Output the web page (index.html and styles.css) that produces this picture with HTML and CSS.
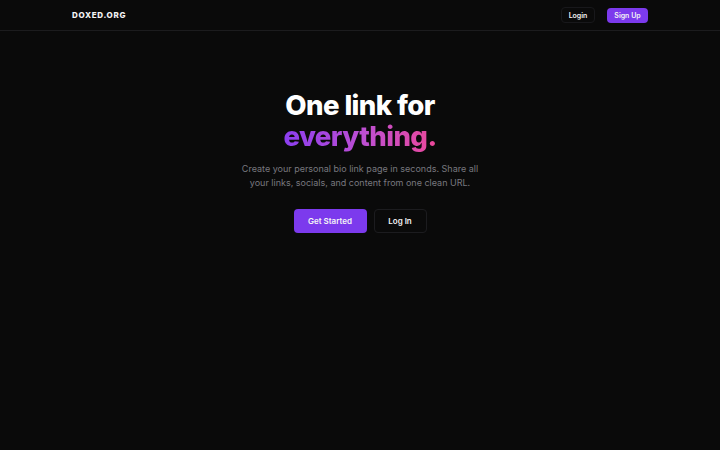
FILE: index.html
```html
<!DOCTYPE html>
<html lang="en">
<head>
<meta charset="utf-8">
<title>DOXED.ORG</title>
<link rel="stylesheet" href="styles.css">
</head>
<body>
<header class="topbar">
  <div class="topbar-inner">
    <a class="logo" href="#">DOXED.ORG</a>
    <nav class="nav">
      <a class="btn-ghost" href="#">Login</a>
      <a class="btn-primary-sm" href="#">Sign Up</a>
    </nav>
  </div>
</header>
<main class="hero">
  <h1 class="title">One link for<br><span class="grad">everything.</span></h1>
  <p class="lead">Create your personal bio link page in seconds. Share all your links, socials, and content from one clean URL.</p>
  <div class="actions">
    <a class="btn-primary" href="#">Get Started</a>
    <a class="btn-outline" href="#">Log In</a>
  </div>
</main>
</body>
</html>
```
FILE: styles.css
```css
* { box-sizing: border-box; }
html, body { margin: 0; padding: 0; }
body {
  background: #0a0a0a;
  color: #fafafa;
  font-family: Inter, "Noto Sans", sans-serif;
  min-height: 450px;
}
a { text-decoration: none; color: inherit; }
.topbar {
  border-bottom: 1px solid #1c1c1e;
  height: 31px;
}
.topbar-inner {
  max-width: 576px;
  margin: 0 auto;
  height: 30px;
  display: flex;
  align-items: center;
  justify-content: space-between;
}
.logo {
  font-size: 8px;
  font-weight: 800;
  letter-spacing: 0.7px;
  color: #f4f4f5;
}
.nav { display: flex; align-items: center; gap: 12px; }
.btn-ghost {
  font-size: 7px;
  font-weight: 600;
  padding: 0 8px;
  width: 34px;
  justify-content: center;
  height: 16px;
  display: flex; align-items: center;
  border: 1px solid #18181b;
  border-radius: 4px;
  color: #f4f4f5;
}
.btn-primary-sm {
  font-size: 7px;
  font-weight: 600;
  height: 15px;
  width: 41px;
  justify-content: center;
  display: flex; align-items: center;
  background: #7c3aed;
  border-radius: 4px;
  color: #f4f4f5;
}
.hero {
  display: flex;
  flex-direction: column;
  align-items: center;
  text-align: center;
  padding-top: 59px;
}
.title {
  margin: 0;
  font-size: 27.6px;
  line-height: 31px;
  font-weight: 800;
  letter-spacing: -0.6px;
  color: #ffffff;
}
.grad {
  background: linear-gradient(90deg, #8b3ef0 0%, #c04fd0 55%, #ec4899 100%);
  -webkit-background-clip: text;
  background-clip: text;
  color: transparent;
}
.lead {
  margin: 10px 0 0;
  max-width: 242px;
  font-size: 9px;
  line-height: 14px;
  color: #78787f;
}
.actions {
  display: flex;
  gap: 7px;
  margin-top: 19px;
}
.btn-primary {
  height: 24px;
  width: 73px;
  justify-content: center;
  display: flex; align-items: center;
  background: #7c3aed;
  border-radius: 4px;
  font-size: 8px;
  font-weight: 600;
  color: #f4f4f5;
}
.btn-outline {
  height: 24px;
  width: 53px;
  justify-content: center;
  display: flex; align-items: center;
  border: 1px solid #1c1c1f;
  border-radius: 4px;
  font-size: 8px;
  font-weight: 600;
  color: #f4f4f5;
}
```
